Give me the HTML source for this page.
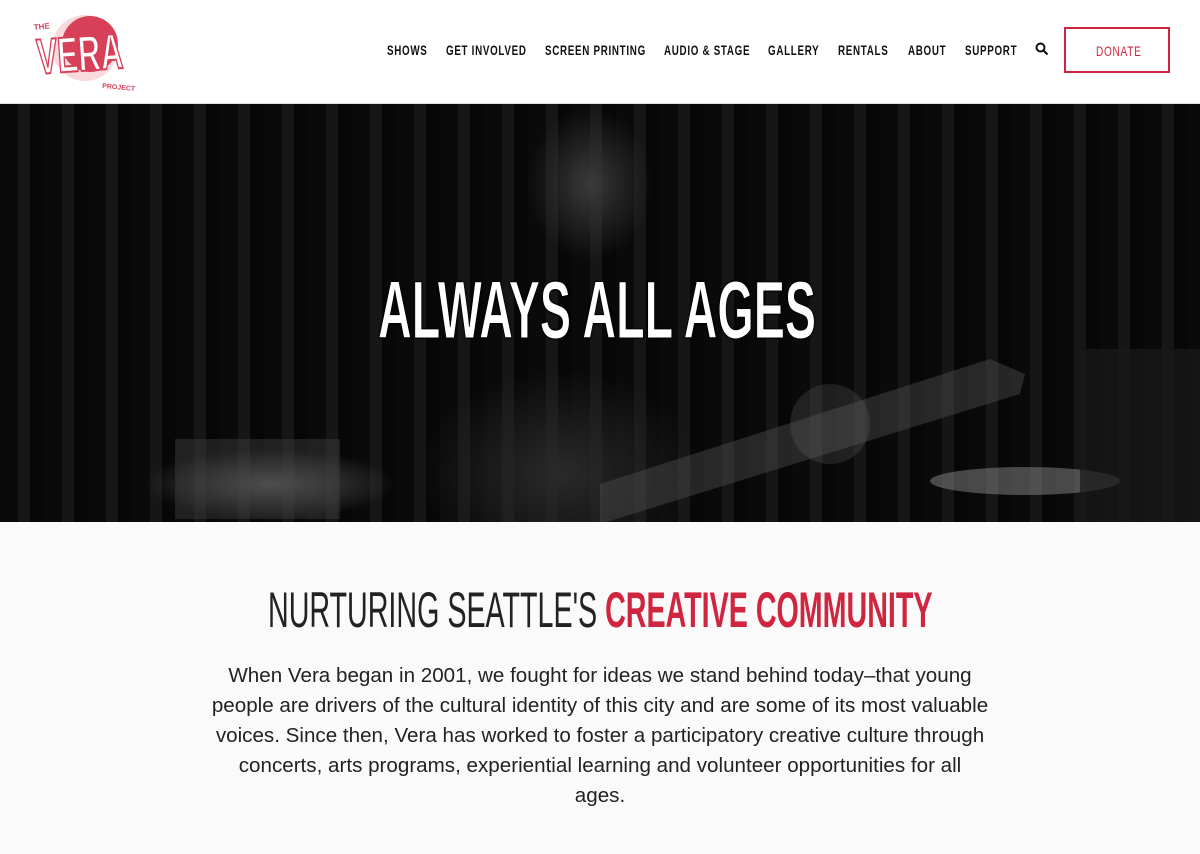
<!DOCTYPE html>
<html><head><style>
*{margin:0;padding:0;box-sizing:border-box}
body{width:1200px;height:854px;overflow:hidden;background:#fafafa;font-family:"Liberation Sans",sans-serif}
header{height:104px;background:#fff;position:relative;border-bottom:1px solid #ddd}
.nav span{position:absolute;top:42px;font-weight:bold;font-size:14px;letter-spacing:1px;color:#111;white-space:nowrap;transform:scaleX(.70);transform-origin:0 0}
.donate{position:absolute;left:1064px;top:27px;width:106px;height:46px;border:2px solid #d0253f}
.donate span{position:absolute;left:30px;top:14px;color:#d0253f;font-size:14px;letter-spacing:1px;transform:scaleX(.72);transform-origin:0 0;white-space:nowrap}
.hero{position:absolute;top:104px;left:0;width:1200px;height:418px;overflow:hidden;
background:
radial-gradient(ellipse 90px 110px at 590px 80px,#3a3a3a,transparent 70%),
radial-gradient(ellipse 200px 150px at 560px 370px,#2a2a2a,transparent 70%),
radial-gradient(ellipse 120px 40px at 1020px 480px,#777,transparent 70%),
radial-gradient(ellipse 180px 50px at 270px 380px,#555,transparent 70%),
repeating-linear-gradient(90deg,#0a0a0a 0 18px,#161616 18px 30px,#070707 30px 44px);}
.hero h1{position:absolute;top:160px;left:378px;color:#fff;font-weight:bold;font-size:82px;white-space:nowrap;-webkit-text-stroke:1px #000;text-shadow:0 0 3px #000;transform:scaleX(.57);transform-origin:0 0}
h2{position:absolute;top:581px;left:268px;font-size:50px;font-weight:normal;color:#222;white-space:nowrap;transform:scaleX(.573);transform-origin:0 0}
h2 b{color:#d0253f}
p{position:absolute;top:661px;left:0;width:1200px;text-align:center;font-size:20px;line-height:30px;color:#222;white-space:nowrap;transform:scaleX(1.03);transform-origin:600px 0}
</style></head><body>
<header>
<svg style="position:absolute;left:30px;top:8px" width="110" height="86" viewBox="0 0 110 86">
<circle cx="55" cy="40" r="33" fill="#d8405a" opacity=".2"/>
<circle cx="60" cy="36" r="28" fill="#d8405a"/>
<text x="4" y="22" font-family="Liberation Sans" font-weight="bold" font-size="8" fill="#d8405a" transform="rotate(-6 4 22)">THE</text>
<g transform="translate(8,66) rotate(-4) scale(.62,1)"><text x="0" y="0" font-family="Liberation Sans" font-weight="bold" font-size="50" fill="#fff" stroke="#d8405a" stroke-width="2">VERA</text></g>
<text x="72" y="80" font-family="Liberation Sans" font-weight="bold" font-size="7" fill="#d8405a" transform="rotate(5 72 80)">PROJECT</text>
</svg>
<div class="nav">
<span style="left:387px">SHOWS</span><span style="left:446px">GET INVOLVED</span><span style="left:545px">SCREEN PRINTING</span><span style="left:664px">AUDIO &amp; STAGE</span><span style="left:768px">GALLERY</span><span style="left:838px">RENTALS</span><span style="left:908px">ABOUT</span><span style="left:965px">SUPPORT</span>
</div>
<svg style="position:absolute;left:1035px;top:42px" width="14" height="14" viewBox="0 0 14 14"><circle cx="5.5" cy="5.5" r="4" fill="none" stroke="#111" stroke-width="2"/><path d="M8.5 8.5l4 4" stroke="#111" stroke-width="2.2"/></svg>
<div class="donate"><span>DONATE</span></div>
</header>
<div class="hero">
<svg style="position:absolute;left:0;top:0" width="1200" height="418">
<path d="M600 420 L1020 290 L1025 270 L990 255 L600 380 Z" fill="#555" opacity=".4"/>
<ellipse cx="1025" cy="377" rx="95" ry="14" fill="#888" opacity=".5"/>
<rect x="175" y="335" width="165" height="80" fill="#444" opacity=".4"/>
<ellipse cx="830" cy="320" rx="40" ry="40" fill="#666" opacity=".25"/>
<rect x="1080" y="245" width="120" height="173" fill="#1a1a1a" opacity=".7"/>
</svg>
<h1>ALWAYS ALL AGES</h1></div>
<h2>NURTURING SEATTLE'S <b>CREATIVE COMMUNITY</b></h2>
<p>When Vera began in 2001, we fought for ideas we stand behind today–that young<br>people are drivers of the cultural identity of this city and are some of its most valuable<br>voices. Since then, Vera has worked to foster a participatory creative culture through<br>concerts, arts programs, experiential learning and volunteer opportunities for all<br>ages.</p>
</body></html>
